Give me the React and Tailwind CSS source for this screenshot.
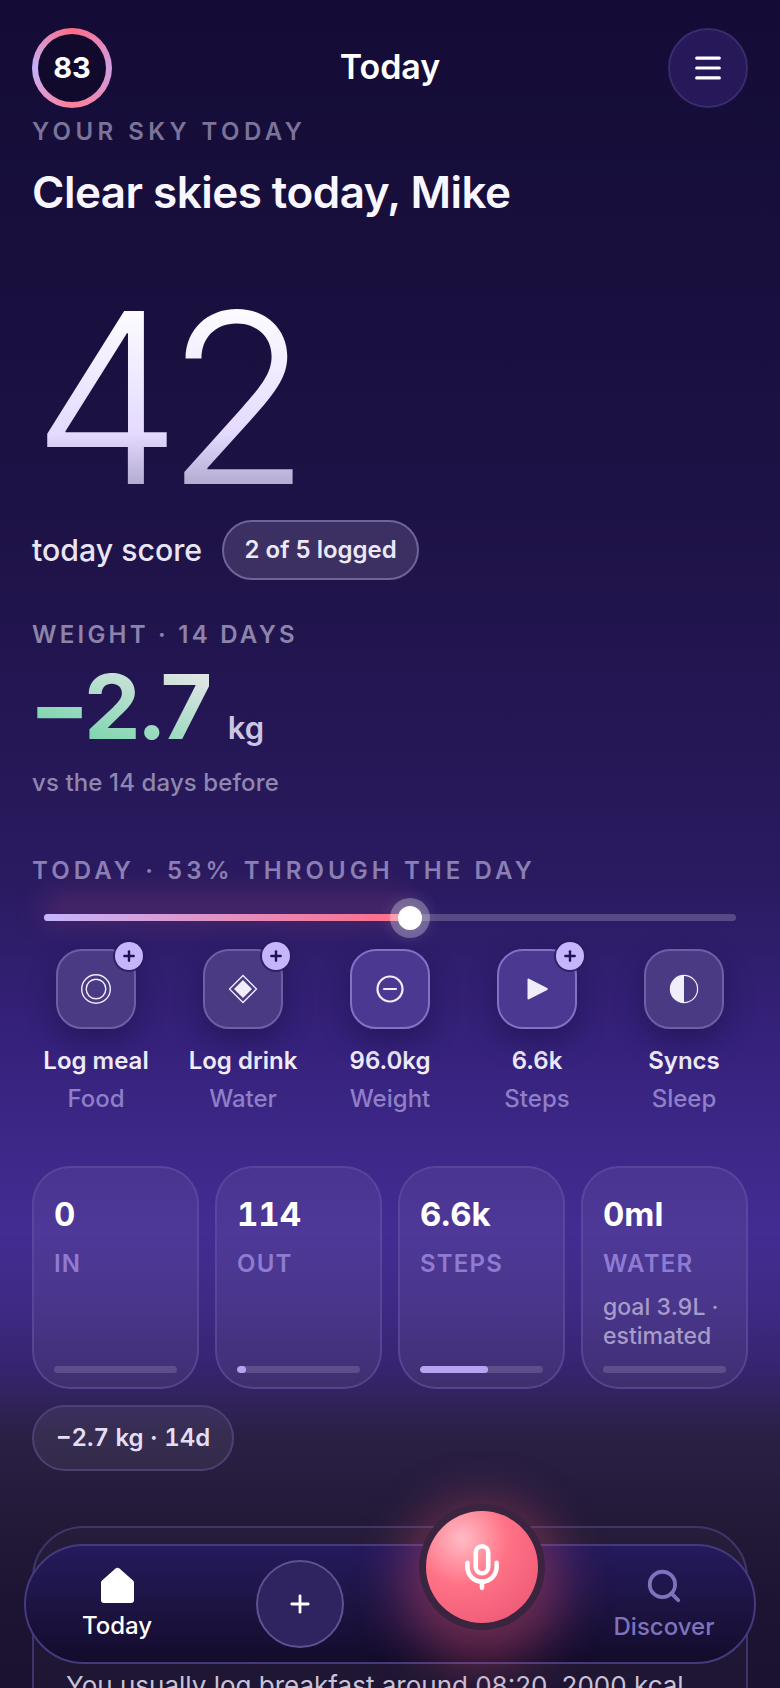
import { Menu, Plus, Search, Mic } from 'lucide-react'

const font = { fontFamily: 'Inter, sans-serif' }

const tiles = [
  { label: 'Log meal', sub: 'Food', icon: 'meal', plus: true },
  { label: 'Log drink', sub: 'Water', icon: 'drink', plus: true },
  { label: '96.0kg', sub: 'Weight', icon: 'weight', active: true },
  { label: '6.6k', sub: 'Steps', icon: 'steps', plus: true, active: true },
  { label: 'Syncs', sub: 'Sleep', icon: 'sleep' },
]

const cards = [
  { value: '0', label: 'IN', fill: 0 },
  { value: '114', label: 'OUT', fill: 7 },
  { value: '6.6k', label: 'STEPS', fill: 55 },
  { value: '0ml', label: 'WATER', note: 'goal 3.9L · estimated', fill: 0 },
]

function TileIcon({ name }) {
  if (name === 'meal') {
    return (
      <svg width="32" height="32" viewBox="0 0 32 32" fill="none" stroke="#f1edfb" strokeWidth="1.4">
        <circle cx="16" cy="16" r="14.3" />
        <circle cx="16" cy="16" r="9.8" />
      </svg>
    )
  }
  if (name === 'drink') {
    return (
      <svg width="30" height="30" viewBox="0 0 30 30" fill="none">
        <path d="M15 1.5 28.5 15 15 28.5 1.5 15Z" stroke="#f1edfb" strokeWidth="1.3" />
        <path d="M15 6 24 15 15 24 6 15Z" fill="#f1edfb" />
      </svg>
    )
  }
  if (name === 'weight') {
    return (
      <svg width="30" height="30" viewBox="0 0 30 30" fill="none" stroke="#f1edfb" strokeWidth="2.2">
        <circle cx="15" cy="15" r="12.5" />
        <path d="M9 15h12" strokeLinecap="round" />
      </svg>
    )
  }
  if (name === 'steps') {
    return (
      <svg width="24" height="24" viewBox="0 0 24 24">
        <path d="M2.5 2.5a1 1 0 0 1 1.5-.8l18.2 9.4a1 1 0 0 1 0 1.8L4 22.3a1 1 0 0 1-1.5-.8Z" fill="#f1edfb" />
      </svg>
    )
  }
  return (
    <svg width="30" height="30" viewBox="0 0 30 30" fill="none">
      <circle cx="15" cy="15" r="13.6" stroke="#f1edfb" strokeWidth="1.2" />
      <path d="M15 1.4a13.6 13.6 0 0 0 0 27.2Z" fill="#f1edfb" />
    </svg>
  )
}

function Tile({ label, sub, icon, plus, active }) {
  return (
    <div className="flex w-[147px] flex-col items-center">
      <div
        className={`relative flex size-20 items-center justify-center rounded-[26px] border-2 shadow-[0_12px_28px_rgba(20,10,60,0.45)] ${
          active ? 'border-[#8470c4] bg-[#4b3890]' : 'border-[#6f5ea6] bg-[#493a83]'
        }`}
      >
        <TileIcon name={icon} />
        {plus && (
          <div className="absolute -right-[9px] -top-[9px] flex size-7 items-center justify-center rounded-full bg-[#c4b5fd] shadow-[0_0_0_2px_rgba(40,28,90,0.8)]">
            <Plus size={16} strokeWidth={3.6} color="#24104f" />
          </div>
        )}
      </div>
      <div className="mt-[17px] text-[24px] font-semibold leading-[30px] text-[#f1edfb]">{label}</div>
      <div className="mt-2 text-[24px] font-medium leading-[30px] text-[#8f7fc7]">{sub}</div>
    </div>
  )
}

function StatCard({ value, label, note, fill }) {
  return (
    <div className="flex h-[223px] flex-col rounded-[38px] border-2 border-[#5f4d9f]/70 bg-white/[0.06] px-[20px] pb-[14px] pt-[22px]">
      <div className="text-[33px] font-bold tabular-nums leading-[48px] text-white">{value}</div>
      <div className="mt-[5px] text-[24px] font-semibold leading-[42px] tracking-[0.05em] text-[#8f7cd2]">{label}</div>
      {note && <div className="mt-[8px] text-[23px] font-medium tabular-nums leading-[29px] text-[#a79bc9]">{note}</div>}
      <div className="mt-auto h-[7px] overflow-hidden rounded-full bg-white/15">
        <div className="h-full rounded-full bg-[#b7a3ef]" style={{ width: `${fill}%` }} />
      </div>
    </div>
  )
}

export default function App() {
  return (
    <div
      style={font}
      className="relative h-[1688px] w-[780px] overflow-hidden bg-[linear-gradient(180deg,#140c36_0%,#180f3d_15%,#1d1245_30%,#2a1a60_52%,#36227c_62%,#432c92_73%,#3f2a86_77%,#372470_81%,#2a2045_85%,#231a38_90%,#1c1432_95%,#1b1230_100%)]"
    >
      <header className="flex items-center justify-between px-8 pt-7">
        <div className="flex size-20 items-center justify-center rounded-full bg-[conic-gradient(#ff6b85,#cf9fe0_25%,#ff7d96_50%,#c4b2fb_75%,#ff6b85)] p-[6px]">
          <div className="flex size-full items-center justify-center rounded-full bg-[#120a2c] text-[29px] font-bold text-white">83</div>
        </div>
        <div className="mt-[-2px] text-[34px] font-semibold leading-none text-white">Today</div>
        <div className="flex size-20 items-center justify-center rounded-full border-2 border-[#3a2b6c] bg-[#27185a] text-white">
          <Menu size={34} strokeWidth={2.2} />
        </div>
      </header>

      <section className="px-8">
        <div className="mt-[8px] text-[24px] font-semibold leading-[32px] tracking-[0.185em] text-[#7b7399]">YOUR SKY TODAY</div>
        <h1 className="mt-[14px] text-[44px] font-semibold leading-[60px] tracking-[-0.012em] text-[#f8f6ff]">Clear skies today, Mike</h1>

        <div className="mt-[52px] bg-[linear-gradient(180deg,#ffffff_10%,#e4daff_65%,#aaa1c8_90%)] bg-clip-text text-[238px] font-[340] leading-[246px] tracking-[-0.07em] text-transparent">
          42
        </div>

        <div className="flex items-center gap-[20px]">
          <span className="text-[30.25px] font-medium leading-[60px] text-[#e9e5f4]">today score</span>
          <span className="flex h-[60px] items-center rounded-full border-2 border-[#6f6499] bg-[#3c3062] px-[20.5px] text-[24px] font-semibold text-[#ece8f8]">
            2 of 5 logged
          </span>
        </div>

        <div className="mt-[39px] text-[24px] font-semibold leading-[32px] tracking-[0.135em] text-[#8c84ab]">WEIGHT · 14 DAYS</div>
        <div className="mt-[4px] flex items-baseline gap-[19px]">
          <span className="ml-[-3px] bg-[linear-gradient(20deg,#7fd6b0_25%,#dfe5e4_85%)] bg-clip-text text-[90px] font-bold leading-[104px] tracking-[-0.045em] text-transparent">
            −2.7
          </span>
          <span className="text-[31px] font-semibold text-[#cdc6e3]">kg</span>
        </div>
        <div className="mt-[8px] text-[24px] font-medium leading-[32px] tracking-[0.005em] text-[#8f87b0]">vs the 14 days before</div>

        <div className="mt-[56px] text-[24px] font-semibold leading-[32px] tracking-[0.17em] text-[#8a7fb4]">TODAY · 53% THROUGH THE DAY</div>

        <div className="relative mx-3 mt-[27px] h-[7px] rounded-full bg-white/20">
          <div className="absolute -top-[20px] left-0 h-[28px] w-[366px] bg-[#ff6b85]/15 blur-[14px]" />
          <div className="absolute inset-y-0 left-0 w-[366px] rounded-full bg-[linear-gradient(90deg,#c4b5fd,#ff6b85)]" />
          <div className="absolute left-[354px] top-[-8px] size-[24px] rounded-full bg-white shadow-[0_0_0_8px_rgba(255,255,255,0.28),0_0_16px_8px_rgba(255,255,255,0.12)]" />
        </div>
      </section>

      <section className="mt-[28px] flex justify-center">
        <div className="flex w-[735px]">
          {tiles.map((t) => (
            <Tile key={t.sub} {...t} />
          ))}
        </div>
      </section>

      <section className="mt-[52px] grid grid-cols-4 gap-4 px-8">
        {cards.map((c) => (
          <StatCard key={c.label} {...c} />
        ))}
      </section>

      <div className="mt-[16px] px-8">
        <span className="inline-flex h-[66px] items-center rounded-full border-2 border-[#4d4174] bg-white/[0.06] px-[22px] text-[24px] font-semibold tabular-nums text-[#e4def5]">
          −2.7 kg · 14d
        </span>
      </div>

      <div className="mx-8 mt-[55px] h-[300px] rounded-[52px] border-2 border-[#40356a] bg-white/[0.02] px-[32px] pt-[140px] text-[26px] leading-[36px] text-[#c9c3d8]">
        You usually log breakfast around 08:20, 2000 kcal
      </div>

      <nav className="absolute left-[24px] top-[1544px] flex h-[120px] w-[732px] items-center rounded-[60px] border-2 border-[#47397e] bg-[linear-gradient(180deg,#251a5c_0%,#1d1444_50%,#130c2b_100%)]">
        <div className="ml-[31px] flex w-[120px] flex-col items-center">
          <svg width="35" height="37" viewBox="0 0 35 37">
            <path d="M15.5 1.6a3 3 0 0 1 4 0L33 13.5a3 3 0 0 1 1 2.2V33a3 3 0 0 1-3 3H4a3 3 0 0 1-3-3V15.7a3 3 0 0 1 1-2.2Z" fill="#fff" />
          </svg>
          <span className="mt-[7px] text-[24px] font-medium leading-[30px] text-white">Today</span>
        </div>
        <div className="ml-[79px] flex size-[88px] items-center justify-center rounded-full border-2 border-[#5f5190] bg-[#2f2360] text-white">
          <Plus size={28} strokeWidth={2.4} />
        </div>
        <div className="ml-[260px] flex w-[120px] flex-col items-center">
          <Search size={38} strokeWidth={2.4} color="#7f73bd" />
          <span className="mt-[7px] text-[24px] font-medium leading-[30px] text-[#7f73bd]">Discover</span>
        </div>
      </nav>

      <div className="absolute left-[419px] top-[1504px] size-[126px] rounded-full bg-[#3a2440] shadow-[0_16px_50px_18px_rgba(255,90,120,0.35)]" />
      <div className="absolute left-[426px] top-[1511px] flex size-[112px] items-center justify-center rounded-full bg-[radial-gradient(circle_at_32%_25%,#ffbcc6_0%,#ff7386_40%,#f25f7a_75%,#dd5a74_100%)] text-white">
        <Mic size={50} strokeWidth={2.2} />
      </div>
    </div>
  )
}
